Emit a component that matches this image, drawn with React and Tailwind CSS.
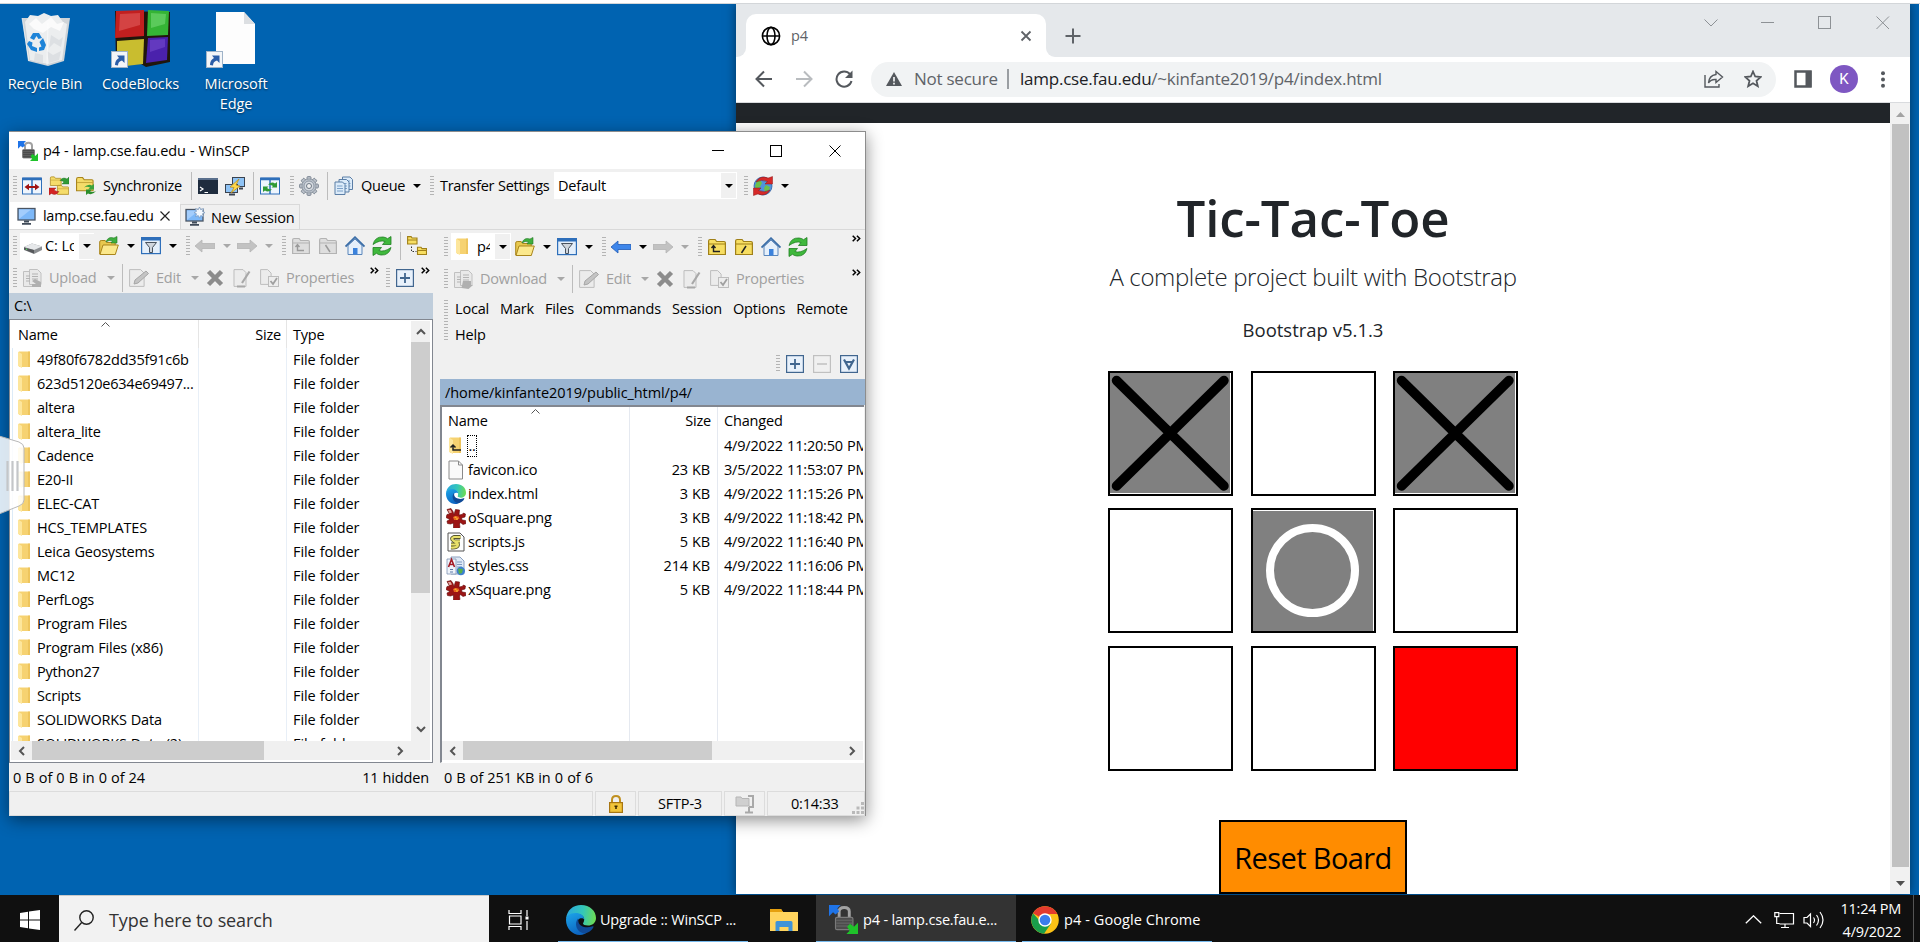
import React from "react";

/* ---------- small shared pieces ---------- */

const Svg = ({ w = 20, h = 20, vb, className = "", children }) => (
  <svg width={w} height={h} viewBox={vb || `0 0 ${w} ${h}`} className={`block shrink-0 ${className}`} fill="none">
    {children}
  </svg>
);

const Grip = ({ className = "", rows = 7 }) => (
  <Svg w={4} h={rows * 3 - 1} className={className}>
    {Array.from({ length: rows }, (_, i) => (
      <rect key={i} y={i * 3} width="4" height="1" fill="#b4b4b4" />
    ))}
  </Svg>
);

const Caret = ({ className = "", color = "#000" }) => (
  <Svg w={8} h={4} className={className}>
    <path d="M0 0h8L4 4z" fill={color} />
  </Svg>
);

const Sep = ({ className = "" }) => <div className={`h-[28px] w-px shrink-0 bg-[#bcbcbc] ${className}`} />;

const More = ({ className = "" }) => (
  <Svg w={9} h={7} className={className}>
    <path d="M.7.7l2.8 2.8L.7 6.3M4.9.7l2.8 2.8-2.8 2.8" stroke="#000" strokeWidth="1.5" />
  </Svg>
);

const Txt = ({ className = "", children }) => (
  <span className={`block shrink-0 whitespace-nowrap ${className}`}>{children}</span>
);

/* ---------- toolbar icons ---------- */

const FolderShape = ({ x = 0, y = 0, s = 1, fill = "#f5dc6a", stroke = "#a9851c" }) => (
  <g transform={`translate(${x} ${y}) scale(${s})`}>
    <path d="M.5 12.500V2q0-1.500 1.500-1.500h4l1.500 2h7q1 0 1 1v9z" fill={fill} stroke={stroke} />
    <path d="M1 5h14" stroke={stroke} strokeOpacity=".6" />
  </g>
);

const SplitIcon = ({ className }) => (
  <Svg className={className}>
    <rect x=".5" y="2" width="19" height="16" fill="#eef5fd" stroke="#2e6fba" />
    <path d="M1 3h18" stroke="#2e6fba" strokeWidth="2.500" />
    <path d="M10 3v15" stroke="#2e6fba" strokeWidth="1.500" />
    <path d="M4 11h12" stroke="#a01414" strokeWidth="2" />
    <path d="M2.500 11L7 7.800v6.400zM17.500 11L13 7.800v6.400z" fill="#a01414" />
  </Svg>
);

const SyncFoldersIcon = ({ className }) => (
  <Svg className={className}>
    <FolderShape x={1} y={0.5} s={0.72} />
    <FolderShape x={8} y={9} s={0.75} />
    <path d="M11 4.500Q14 .5 18 3L20 1v7h-7l2-2q-1.500-1.500-4-1.500z" fill="#2f9a35" stroke="#1d6f22" strokeWidth=".4" />
    <path d="M10 15.500Q7 20 2.500 17.500L0 19v-7h7l-2 2q2 1.500 5 1.500z" fill="#d42424" stroke="#8d1212" strokeWidth=".4" />
  </Svg>
);

const SynchronizeIcon = ({ className }) => (
  <Svg className={className}>
    <FolderShape x={0} y={1} s={1.1} />
    <path d="M8 11.500q4-4 8-2l2-1.500v5.500h-6l2-2q-3-1.500-6 0z" fill="#3ba23c" />
    <path d="M20 15q-4 5-8 2.500L10 19v-5.500h6l-2 2q3 1 6-.5z" fill="#2b8e2d" />
  </Svg>
);

const TerminalIcon = ({ className }) => (
  <Svg className={className}>
    <rect y="2" width="20" height="16" fill="#1f2c3e" />
    <rect y="2" width="20" height="2" fill="#5a6f8c" />
    <path d="M2 11l3 2-3 2M6.500 16.500H10" stroke="#fff" strokeWidth="1.200" />
  </Svg>
);

const PuttyIcon = ({ className }) => (
  <Svg className={className}>
    <rect x="7.500" y="1.500" width="12" height="9" fill="#8fc3f5" stroke="#3a4350" />
    <rect x=".5" y="8.500" width="12" height="8" fill="#8fc3f5" stroke="#3a4350" />
    <path d="M4 18.500h6M14 12.500h4" stroke="#3a4350" strokeWidth="2" />
    <path d="M14 3L5 11l4 .5L6 17l9-7-4-1z" fill="#ffd84a" stroke="#b98a12" strokeWidth=".7" />
  </Svg>
);

const PanelsSyncIcon = ({ className }) => (
  <Svg className={className}>
    <rect x=".5" y="2" width="19" height="16" fill="#eef5fd" stroke="#2e6fba" />
    <path d="M1 3h18" stroke="#2e6fba" strokeWidth="2.500" />
    <path d="M10 3v15" stroke="#2e6fba" strokeWidth="1.500" />
    <path d="M8 8.500Q12 5 15 7.500l2-1.500v5.500h-5.500l1.500-1.500q-2-1.500-5-1.500z" fill="#2f9a35" />
    <path d="M12 13.500Q8 17 5 14.500L3 16v-5.500h5.500L7 12q2 1.500 5 1.500z" fill="#2f9a35" />
  </Svg>
);

const GearIcon = ({ className }) => (
  <Svg className={className}>
    {[0, 45, 90, 135].map((a) => (
      <rect key={a} x="8" y=".6" width="4" height="18.800" rx="1" fill="#b9bfc8" stroke="#78828e" strokeWidth=".9" transform={`rotate(${a} 10 10)`} />
    ))}
    <circle cx="10" cy="10" r="7" fill="#bcc3cc" stroke="#848e9a" strokeWidth=".7" />
    <circle cx="10" cy="10" r="5" stroke="#8d97a4" strokeWidth="1" fill="#d5dae0" />
    <circle cx="10" cy="10" r="2.500" fill="#f0f0f0" stroke="#6f7986" />
  </Svg>
);

const QueueIcon = ({ className }) => (
  <Svg className={className}>
    {[[8.5, 1], [5, 3.5], [1, 6]].map(([x, y]) => (
      <g key={x} transform={`translate(${x} ${y})`}>
        <path d="M0 0h7.500l2.500 2.500V12.500H0z" fill="#dcebf9" stroke="#5b7ea6" />
        <path d="M2 4h5.500M2 6.500h6M2 9h6" stroke="#7ba0c8" />
      </g>
    ))}
  </Svg>
);

const GlobeSyncIcon = ({ className }) => (
  <Svg className={className}>
    <circle cx="10" cy="10" r="9" fill="#4f93dc" stroke="#2a61a8" strokeWidth=".8" />
    <path d="M4 5l3-1 2 3-2 4-4 2-1-3zM13 9l4 2-1 3-4 2-1-4z" fill="#6cc04c" />
    <path d="M3 6Q7-1 15 2l1-.2L19.500.5V8H12l2.500-2.500Q8 3 3 6z" fill="#d62828" stroke="#8f1414" strokeWidth=".5" />
    <path d="M17 14q-4 7-12 4l-1 .2L.5 19.500V12H8l-2.500 2.500Q12 17 17 14z" fill="#d62828" stroke="#8f1414" strokeWidth=".5" />
  </Svg>
);

const MonitorIcon = ({ className, star }) => (
  <Svg className={className}>
    <rect x="1" y="2.500" width="17" height="11.500" fill="#7db8f8" stroke="#4b5563" strokeWidth="1.300" />
    <path d="M2 13V3.500h12z" fill="#a3cdfc" />
    <path d="M7 14.500h5v2H7zM5 17h9v1.800H5z" fill="#3f4a58" />
    {star && <path d="M14.500 0l1.200 2.600 2.800-1-1 2.800L20 5.600l-2.500 1.200 1 2.800-2.800-1-1.200 2.600-1.200-2.600-2.800 1 1-2.800L9 5.600l2.500-1.200-1-2.800 2.800 1z" fill="#f3f8fe" stroke="#7e9cc0" strokeWidth=".8" />}
  </Svg>
);

const DriveIcon = ({ className }) => (
  <Svg w={18} className={className}>
    <path d="M0 11l8-3.500 10 3v3.500l-8 4-10-4z" fill="#8a8d90" />
    <path d="M0 11l8-3.500 10 3-8 3.500z" fill="#e6e8ea" />
    <path d="M0 11.500v2l10 4v-3.500z" fill="#55585b" />
    <circle cx="2.500" cy="13.200" r=".7" fill="#55e05a" />
  </Svg>
);

const OpenFolderIcon = ({ className }) => (
  <Svg className={className}>
    <path d="M.7 18V6q0-1.500 1.500-1.500h4l1.500 2h8.500V18z" fill="#e8c84e" stroke="#a9851c" />
    <path d="M1 18.500L4 9h15.300l-3 9.500z" fill="#fbe88c" stroke="#a9851c" />
    <path d="M7 6q2-6 8-4l3-1.500V7h-6l1.500-2Q10 3.500 7 6z" fill="#3fae3f" stroke="#217a24" strokeWidth=".6" />
  </Svg>
);

const FilterIcon = ({ className }) => (
  <Svg className={className}>
    <rect x=".6" y="1.600" width="18.800" height="16" fill="#e4effb" stroke="#2e6fba" strokeWidth="1.200" />
    <path d="M0 3h20" stroke="#2e6fba" strokeWidth="3" />
    <path d="M4.500 6.500h11l-4 5v5h-3v-5z" fill="#cfd5dc" stroke="#48525e" />
  </Svg>
);

const ArrowIcon = ({ className, dir = "l", on }) => (
  <Svg className={className}>
    <path
      d="M0 10l7-6v3.500h13v5H7V16z"
      fill={on ? "#3e86ea" : "#c2c2c2"}
      stroke={on ? "#1f5bb5" : "#b5b5b5"}
      strokeWidth=".8"
      transform={dir === "r" ? "matrix(-1 0 0 1 20 0)" : undefined}
    />
  </Svg>
);

const ParentIcon = ({ className, on, root }) => {
  const f = on ? "#f7de62" : "#dedede";
  const s = on ? "#a08018" : "#b3b3b3";
  return (
    <Svg w={18} className={className}>
      <path d="M.6 17.500V4q0-1.500 1.500-1.500h5l1.500 2H16q1.400 0 1.400 1.500v11.500z" fill={f} stroke={s} strokeWidth="1.200" />
      <path d="M1 7h16" stroke={s} />
      {root ? (
        <path d={on ? "M11 9l-4.500 7" : "M6.500 9l4.500 7"} stroke={on ? "#222" : "#9a9a9a"} strokeWidth="1.500" />
      ) : (
        <path d="M5.500 9v5.500H12M3.500 11l2-2.500 2 2.500" stroke={on ? "#222" : "#9a9a9a"} strokeWidth="1.400" />
      )}
    </Svg>
  );
};

const HomeIcon = ({ className }) => (
  <Svg className={className}>
    <path d="M3 9.500L10 3l7 6.500V18.500H3z" fill="#e6f0fb" stroke="#5a86bb" />
    <path d="M.5 10.500L10 1.200l9.500 9.300" stroke="#3b6ea8" strokeWidth="1.800" />
    <rect x="8" y="12" width="4.500" height="6.500" fill="#3b82dc" />
  </Svg>
);

const RefreshIcon = ({ className }) => (
  <Svg className={className}>
    <path d="M1 8.500Q3 .5 11 1q3 .3 4.500 1.700L19 .5V8.500h-8.500l2.500-3Q8 3.500 1 8.500z" fill="#3fb83c" stroke="#1f7f22" strokeWidth=".8" />
    <path d="M19 11.500q-2 8-10 7.500-3-.3-4.500-1.700L1 19.500v-8h8.500l-2.500 3q5 2 12-3z" fill="#3fb83c" stroke="#1f7f22" strokeWidth=".8" />
  </Svg>
);

const TreeIcon = ({ className }) => (
  <Svg className={className}>
    <path d="M.6 8V.6h3.500l1 1.400H10V8zM10.500 18.500V11.200H14l1 1.400h4.500v5.900z" fill="#f7de62" stroke="#a08018" strokeWidth="1.100" />
    <path d="M1 4h9M11 14.500h8" stroke="#a08018" />
    <path d="M4.500 10.500v5h5" stroke="#333" strokeDasharray="1.500 1.500" />
  </Svg>
);

const Page = ({ x = 0, y = 0 }) => (
  <path transform={`translate(${x} ${y})`} d="M.5.5h8l3.500 3.500V15.500H.5z" fill="#e9e9e9" stroke="#c0c0c0" />
);

const TransferIcon = ({ className, down }) => (
  <Svg className={className}>
    <Page x={0} y={3} />
    <Page x={6} y={1} />
    <path d="M3 8h4M3 10.500h4M3 13h4M9 6h6M9 8.500h6M9 11h6" stroke="#b3b3b3" />
    <path d={down ? "M9 12h8v4h2l-4.500 4-7-1z" : "M18 19h-9v-3h4l-4-3 3-2 6 3z"} fill="#b0b0b0" />
  </Svg>
);

const EditIcon = ({ className }) => (
  <Svg className={className}>
    <path d="M.6 1.600h11l3.500 3.500v13.300H.6z" fill="#ececec" stroke="#bdbdbd" />
    <path d="M5 16l1-4L17 3l2.500 2.500L9 15z" fill="#c4c4c4" stroke="#a6a6a6" />
  </Svg>
);

const DeleteIcon = ({ className }) => (
  <Svg w={18} className={className}>
    <path d="M2.500 3.500l13 13M15.500 3.500l-13 13" stroke="#8c8c8c" strokeWidth="4.500" />
  </Svg>
);

const RenameIcon = ({ className }) => (
  <Svg w={18} className={className}>
    <path d="M1 1.600h9l3 3v13.800H1z" fill="#ececec" stroke="#bdbdbd" />
    <path d="M9 15L16.500 3.500M4 18.500h8" stroke="#a8a8a8" strokeWidth="2.200" />
  </Svg>
);

const PropsIcon = ({ className }) => (
  <Svg className={className}>
    <path d="M.6 1.600h7l3.500 3.500v11.300H.6z" fill="#ececec" stroke="#bdbdbd" />
    <rect x="8.500" y="8.500" width="10" height="10" fill="#ededed" stroke="#bdbdbd" />
    <path d="M10.500 13l2.500 3 4-6" stroke="#a0a0a0" strokeWidth="1.800" />
  </Svg>
);

const BoxBtn = ({ className, kind }) => {
  const off = kind === "minus";
  const c = off ? "#c0c0c0" : "#41668f";
  return (
    <Svg w={18} h={18} className={className}>
      <rect x=".6" y=".6" width="16.800" height="16.800" fill={off ? "#f0f0f0" : "#e8f1fb"} stroke={c} strokeWidth="1.200" />
      {kind === "plus" && <path d="M9 4v10M4 9h10" stroke={c} strokeWidth="1.800" />}
      {kind === "minus" && <path d="M4 9h10" stroke={c} strokeWidth="1.500" />}
      {kind === "all" && <path d="M4 4.500l5 9 5-9M6 7h6" stroke={c} strokeWidth="2.200" />}
    </Svg>
  );
};

const LockBadge = ({ s = 20, className }) => (
  <Svg w={s} h={s} vb="0 0 20 20" className={className}>
    <path d="M7 9V4.500q0-2.800 3.500-2.800T14 4.500V9" stroke="#a2a2a2" strokeWidth="2" />
    <rect x="4.500" y="8.500" width="12" height="8.500" rx="1" fill="#4c4c4c" stroke="#7a7a7a" strokeWidth=".8" />
    <path d="M5 10.500h11M5 12.500h11M5 14.500h11" stroke="#6d6d6d" strokeWidth=".6" />
    <path d="M0 0h8L5.800 2.200 7 4.500 4.500 6.500 2.800 5 0 7.800z" fill="#1f74e8" />
    <path d="M20 20h-8l2.200-2.200L12.500 15l2-2 2.700 2 2.800-2.800z" fill="#1fc22a" />
  </Svg>
);

/* ---------- file list icons ---------- */

const FolderIcon = ({ up }) => (
  <Svg w={13} h={18}>
    <path d="M1 .5h11v15.500H1z" fill="#f6d271" />
    <path d="M10 .5h2v15.500h-2z" fill="#e9bd50" opacity=".6" />
    <path d="M0 .5l4 2.500v14L0 15z" fill="#fde69c" />
    {up && <path d="M4 8v5h8M1.500 10.500L4 8l2.500 2.500" stroke="#222" strokeWidth="1.500" />}
  </Svg>
);

const EdgeIcon = ({ s = 20, id }) => (
  <Svg w={s} h={s} vb="0 0 30 30">
    <defs>
      <linearGradient id={`${id}a`} x1="0" y1="8" x2="30" y2="12" gradientUnits="userSpaceOnUse">
        <stop offset="0" stopColor="#2aa7e0" />
        <stop offset=".55" stopColor="#34c7b8" />
        <stop offset="1" stopColor="#6fdc50" />
      </linearGradient>
      <linearGradient id={`${id}b`} x1="5" y1="8" x2="14" y2="29" gradientUnits="userSpaceOnUse">
        <stop offset="0" stopColor="#1ba0e6" />
        <stop offset="1" stopColor="#0c63c0" />
      </linearGradient>
    </defs>
    <path d="M0 14C1 5 7 0 15 0c9 0 15 6 15 13 0 5-4 7.500-8 7.500-3 0-5-1-5-2 0-.8 1.200-1.500 1.200-4C18.200 11 15 9 10.500 9 5 9 1.500 11 0 14z" fill={`url(#${id}a)`} />
    <path d="M0 15c0-4 4-7 9.500-7 5 0 8.700 2.500 8.700 6.500C17 12.500 11 12 11 19c0 6 6 8.500 11 7.500-2 2-5 3.500-8 3.500C6 30 0 23 0 15z" fill={`url(#${id}b)`} />
    <path d="M12 13.500C8 18 10 27 18 28.500c4-.3 8-3 9.500-6.500.3-.8-.5-1-1-.7C20 24 13 21 12.500 17z" fill="#0f4a97" />
    <path d="M13 15.500q3-3 5.200-1-.2 2-1.200 4 1 2 4 2-5 1-7-1-1.500-2-1-4z" fill="#fff" opacity={s > 20 ? 0 : 1} />
  </Svg>
);

const SplatIcon = () => (
  <Svg>
    <path
      d="M1 1.500l4-1 2 3 1 3 1.500-5 4 .5-.5 5 3-.5 1.500-1.500 2 1-.5 3-3.500 1 .5 2 3.500.5.5 3-3 1-2.500-2-1 1.500.5 3.500-3.500 1.500-3-1v-5l-3 1-3-.5-.5-2.500 3-1.500L0 9.500l1-3 2.500-.5z"
      fill="#9c1414"
      stroke="#5f0909"
      strokeWidth=".6"
    />
    <path d="M2 2l2.500-.3L6 4.500l-2.500.8z" fill="#e3a9a2" />
    <path d="M7 9l2.500-1 3 .5 1 2-2.500 1.500H8z" fill="#e8641c" />
    <path d="M8.500 9.200h2M10 11h2" stroke="#ffd23e" />
  </Svg>
);

const BlankIcon = () => (
  <Svg>
    <path d="M3 1h9.500l4 4v14H3z" fill="#fafafa" stroke="#8a8a8a" />
    <path d="M12.500 1v4h4" stroke="#8a8a8a" />
  </Svg>
);

const JsIcon = () => (
  <Svg>
    <path d="M2 1h12l4 4v14H2z" fill="#fdfdfd" stroke="#555" />
    <path d="M14.500 5H8Q4 6.500 8 9t4 3.500Q12 16 5 15.500M8.500 9.300h5.500M5 12.500h6" stroke="#55552c" strokeWidth="3.800" />
    <path d="M14.500 5H8Q4 6.500 8 9t4 3.500Q12 16 5 15.500M8.500 9.300h5.500M5 12.500h6" stroke="#e8e06a" strokeWidth="2.200" />
  </Svg>
);

const CssIcon = () => (
  <Svg>
    <path d="M5 1h9l4 4v13H5z" fill="#dfe9f6" stroke="#8ba1bf" />
    <path d="M11 6h5M11 8.500h5M11 11h5" stroke="#7e99bf" />
    <path d="M1 3h9v15H1z" fill="#eef3fa" stroke="#7f93b3" strokeWidth=".8" />
    <path d="M2.500 11L5.500 3.500l3 7.500M3.500 8.500h4" stroke="#a31a24" strokeWidth="1.600" />
    <path d="M4 13.500h3M4 16h3" stroke="#5a78a8" />
    <circle cx="14.800" cy="15" r="4.200" fill="#3c7fd0" />
    <path d="M12 12.500l5 .5-1 4-3 1z" fill="#58b04a" />
  </Svg>
);

/* ---------- desktop shortcuts ---------- */

const ShortcutArrow = ({ x, y }) => (
  <g transform={`translate(${x} ${y})`}>
    <rect x=".5" y=".5" width="16" height="16" fill="#f4f6f8" stroke="#9fb3c8" />
    <path d="M4 14q0-5 4-7L6 4.500h7.500V12L11 9.500q-4 1-4 5z" fill="#2b5ea8" />
  </g>
);

const RecycleBin = () => (
  <Svg w={60} h={60}>
    <path d="M7 9l48 0-6 43-16 5-20-5z" fill="#cfd4d8" />
    <path d="M10 13l5-7 8 1 6-3 7 3 7-1 5 7 4 2-5 36-14 4-18-4z" fill="#eceeef" />
    <path d="M14 15l7-6 6 6 9-7 6 7 7-2-4 9-9-4-8 6-9-4z" fill="#fbfbfb" />
    <path d="M36 26l8 5 4-3-2 10-7-4-5 5zM32 42l6 4 8-4-2 9-10 3zM20 44l8 2v8l-9-2z" fill="#dde0e3" />
    <path d="M33 14l-1 42M7 9l7 43" stroke="#fff" strokeOpacity=".6" />
    <g fill="#1e84d8">
      <path d="M15 29l3-5 6 0 3 5-3.500 1-2-3-2.500 4z" />
      <path d="M28 29l3 7-2 5-5 1 0-3.500 2.500-1L24.500 33z" />
      <path d="M14 32l3.500 1.500L17 37l5 2v4l-6-2-4-6z" />
      <path d="M36 37l1 0 7 5-1 8-6 1 0-4 3-1.500-3-3z" opacity="0" />
    </g>
  </Svg>
);

const CodeBlocks = () => (
  <Svg w={60} h={60}>
    <path d="M4 2l55 1v50L35 58l-5-3L5 56z" fill="#20160c" />
    <path d="M5 2l28-1v26L4 29z" fill="#c21f1f" />
    <path d="M9 5l20-1v12L8 22z" fill="#e05c5c" opacity=".6" />
    <path d="M37 1l21 1-1 24-21 1z" fill="#35b435" />
    <path d="M40 4l15 1-1 10-14 4z" fill="#74d874" opacity=".6" />
    <path d="M6 32l27-2-1 25-26 3z" fill="#c9bd2f" />
    <path d="M37 29l20-1-1 23-21 3z" fill="#4a21ac" />
    <path d="M39 31l15-1v8l-15 5z" fill="#7b51d2" opacity=".5" />
    <ShortcutArrow x={0} y={42} />
  </Svg>
);

const BlankShortcut = () => (
  <Svg w={60} h={60}>
    <path d="M16 3h28l11 12v40H16z" fill="#fdfdfd" />
    <path d="M44 3l11 12H44z" fill="#dcdfe2" />
    <ShortcutArrow x={6} y={42} />
  </Svg>
);

const Shortcut = ({ className, icon, lines }) => (
  <div className={`flex shrink-0 flex-col items-center ${className}`}>
    {icon}
    <div className="mt-[5px] text-center text-[14.500px] leading-[20px] text-white [text-shadow:0_1px_2px_rgba(0,0,0,.55)]">
      {lines.map((l) => (
        <div key={l} className="whitespace-nowrap tracking-[-0.1px]">{l}</div>
      ))}
    </div>
  </div>
);

/* ---------- Chrome ---------- */

const XCell = ({ className = "" }) => (
  <div className={`h-[125px] w-[125px] border-2 border-black bg-white ${className}`}>
    <Svg w={121} h={121}>
      <rect width="120" height="120" x={0} y={0} fill="#808080" />
      <path d="M6.500 7.500L114 113M114 7.500L6.500 113" stroke="#000" strokeWidth="9.500" strokeLinecap="round" />
    </Svg>
  </div>
);

const Cell = ({ className = "bg-white" }) => <div className={`h-[125px] w-[125px] border-2 border-black ${className}`} />;

const Chrome = () => (
  <div className="absolute left-[736px] top-0 flex h-[890px] w-[1174px] flex-col bg-white shadow-[0_0_10px_rgba(0,0,0,.5)]">
    <div className="flex h-[53px] shrink-0 bg-[#e5e8eb] text-[#5f6368]">
      <div className="flex h-[53px] w-[10px] items-end bg-white">
        <div className="h-[53px] w-[10px] rounded-br-[9px] bg-[#e5e8eb]" />
      </div>
      <div className="mt-[10px] flex h-[43px] w-[300px] items-center rounded-t-[10px] bg-white pl-[15px]">
        <Svg w={20} h={20} className="text-black">
          <g stroke="#000" strokeWidth="1.600">
            <circle cx="10" cy="10" r="8.600" />
            <ellipse cx="10" cy="10" rx="4" ry="8.600" />
            <path d="M1.500 10h17" strokeWidth="1.500" />
          </g>
        </Svg>
        <Txt className="ml-[10px] w-[229px] text-[14.500px]">p4</Txt>
        <Svg w={12} h={12}>
          <path d="M1.500 1.500l9 9M10.500 1.500l-9 9" stroke="#5f6368" strokeWidth="1.800" />
        </Svg>
      </div>
      <div className="h-[53px] w-[10px] bg-white">
        <div className="h-[53px] w-[10px] rounded-bl-[9px] bg-[#e5e8eb]" />
      </div>
      <Svg w={16} h={16} className="ml-[9px] mt-[24px]">
        <path d="M8 .5v15M.5 8h15" stroke="#5f6368" strokeWidth="2" />
      </Svg>
      <Svg w={14} h={9} className="ml-[623px] mt-[15px]">
        <path d="M.5.5l6.500 6.500L13.500.5" stroke="#8d9195" />
      </Svg>
      <Svg w={14} h={2} className="ml-[43px] mt-[18px]">
        <path d="M0 .5h13" stroke="#8d9195" />
      </Svg>
      <Svg w={14} h={14} className="ml-[43px] mt-[12px]">
        <rect x=".5" y=".5" width="12" height="12" stroke="#8d9195" />
      </Svg>
      <Svg w={14} h={14} className="ml-[44px] mt-[12px]">
        <path d="M.5.5l12.500 12.500M13 .5L.5 13" stroke="#8d9195" />
      </Svg>
    </div>

    <div className="flex h-[46px] shrink-0 items-center border-b border-[#d9dbde] pb-px">
      <Svg w={18} h={18} className="ml-[19px]">
        <path d="M17 9H2M9 1.500L1.500 9 9 16.500" stroke="#54585d" strokeWidth="2" />
      </Svg>
      <Svg w={18} h={18} className="ml-[22px]">
        <path d="M1 9h15M9 1.500L16.500 9 9 16.500" stroke="#b9bcbf" strokeWidth="2" />
      </Svg>
      <Svg w={18} h={18} className="ml-[22px]">
        <path d="M15 4.200A7.600 7.600 0 1 0 16.500 11" stroke="#54585d" strokeWidth="2" />
        <path d="M17.500.5v7.500H10z" fill="#54585d" />
      </Svg>
      <div className="ml-[18px] flex h-[35px] w-[905px] items-center rounded-full bg-[#f1f3f4] text-[17px] text-[#5f6368]">
        <Svg w={16} h={14} className="ml-[15px]">
          <path d="M8 0l8 14H0z" fill="#54585d" />
          <path d="M8 5v4.500M8 10.700v1.800" stroke="#f1f3f4" strokeWidth="1.700" />
        </Svg>
        <Txt className="ml-[12px] w-[93px] pb-px tracking-[-0.25px]">Not secure</Txt>
        <div className="h-[20px] w-[2px] bg-[#9a9ea2]" />
        <Txt className="ml-[11px] w-[575px] tracking-[-0.23px]">
          <span className="text-[#202124]">lamp.cse.fau.edu</span>/~kinfante2019/p4/index.html
        </Txt>
        <Svg w={20} h={18} className="ml-auto mr-[20px]">
          <path d="M1 5v12h14v-3" stroke="#54585d" strokeWidth="1.400" />
          <path d="M12 1.500l6.500 5.500-6.500 5.500V9.500Q7 9 4.500 13 5 5.500 12 4.500z" stroke="#54585d" strokeWidth="1.400" />
        </Svg>
        <Svg w={18} h={18} className="mr-[14px]">
          <path d="M9 1.500l2.200 5 5.500.5-4.200 3.700 1.300 5.500L9 13.300l-4.800 2.900 1.300-5.500L1.300 7l5.500-.5z" stroke="#54585d" strokeWidth="1.800" />
        </Svg>
      </div>
      <Svg w={18} h={18} className="ml-[18px]">
        <rect x="1.500" y="1.500" width="15" height="15" fill="#fff" stroke="#54585d" strokeWidth="2.500" />
        <path d="M11.500 1h6v16h-6z" fill="#54585d" />
      </Svg>
      <div className="ml-[18px] flex h-[28px] w-[28px] items-center justify-center rounded-full bg-[#7e57c2] font-[Roboto] text-[15px] text-white">K</div>
      <Svg w={4} h={17} className="ml-[23px]">
        <circle cx="2" cy="2.200" r="2" fill="#54585d" />
        <circle cx="2" cy="8.500" r="2" fill="#54585d" />
        <circle cx="2" cy="14.800" r="2" fill="#54585d" />
      </Svg>
    </div>

    <div className="flex min-h-0 flex-1">
      <div className="flex w-[1154px] flex-col items-center overflow-hidden bg-white text-[#212529]">
        <div className="h-[20px] w-full shrink-0 bg-[#212529]" />
        <h1 className="mt-[62px] h-[64px] text-[51px] font-semibold leading-[64px] tracking-[-0.1px]">Tic-Tac-Toe</h1>
        <p className="mt-[12px] h-[32px] whitespace-nowrap text-[24px] font-light leading-[32px] tracking-[-0.36px]">A complete project built with Bootstrap</p>
        <p className="mt-[24px] h-[26px] text-[18.500px] leading-[26px]">Bootstrap v5.1.3</p>
        <div className="mt-[28px] flex flex-col items-center">
          <div className="flex">
            <XCell />
            <Cell className="ml-[18px] bg-white" />
            <XCell className="ml-[17px]" />
          </div>
          <div className="mt-[12px] flex">
            <Cell />
            <div className="ml-[18px] h-[125px] w-[125px] border-2 border-black bg-white">
              <Svg w={121} h={121}>
                <rect y="1" width="120" height="120" fill="#808080" />
                <circle cx="59.500" cy="60.500" r="42.500" stroke="#fff" strokeWidth="8" />
              </Svg>
            </div>
            <Cell className="ml-[17px] bg-white" />
          </div>
          <div className="mt-[13px] flex">
            <Cell />
            <Cell className="ml-[18px] bg-white" />
            <Cell className="ml-[17px] bg-[#ff0000]" />
          </div>
        </div>
        <button className="mt-[49px] flex h-[74px] w-[188px] shrink-0 items-center justify-center whitespace-nowrap border-2 border-black bg-[#ff8c00] pt-[2px] text-[29px] tracking-[-0.6px] text-black">
          Reset Board
        </button>
      </div>
      <div className="flex w-[20px] flex-col items-center bg-[#f1f1f1]">
        <Svg w={9} h={5} className="mt-[9px]">
          <path d="M4.500 0L9 5H0z" fill="#a3a3a3" />
        </Svg>
        <div className="mt-[7px] h-[743px] w-[17px] bg-[#c1c1c1]" />
        <Svg w={9} h={5} className="mt-[14px]">
          <path d="M0 0h9L4.500 5z" fill="#505050" />
        </Svg>
      </div>
    </div>
  </div>
);

/* ---------- WinSCP ---------- */

const folders = [
  "49f80f6782dd35f91c6b",
  "623d5120e634e69497...",
  "altera",
  "altera_lite",
  "Cadence",
  "E20-II",
  "ELEC-CAT",
  "HCS_TEMPLATES",
  "Leica Geosystems",
  "MC12",
  "PerfLogs",
  "Program Files",
  "Program Files (x86)",
  "Python27",
  "Scripts",
  "SOLIDWORKS Data",
  "SOLIDWORKS Data (2)",
];

const files = [
  [<BlankIcon />, "favicon.ico", "23 KB", "3/5/2022 11:53:07 PM"],
  [<EdgeIcon id="f" />, "index.html", "3 KB", "4/9/2022 11:15:26 PM"],
  [<SplatIcon />, "oSquare.png", "3 KB", "4/9/2022 11:18:42 PM"],
  [<JsIcon />, "scripts.js", "5 KB", "4/9/2022 11:16:40 PM"],
  [<CssIcon />, "styles.css", "214 KB", "4/9/2022 11:16:06 PM"],
  [<SplatIcon />, "xSquare.png", "5 KB", "4/9/2022 11:18:44 PM"],
];

const SortMark = ({ className }) => (
  <Svg w={9} h={5} className={className}>
    <path d="M.5 4.500l4-4 4 4" stroke="#555" />
  </Svg>
);

const Chevron = ({ className = "", d, w, h }) => (
  <Svg w={w} h={h} className={className}>
    <path d={d} stroke="#555" strokeWidth="2" />
  </Svg>
);

const HScroll = ({ thumb, className }) => (
  <div className={`flex h-[19px] shrink-0 items-center bg-[#f0f0f0] ${className}`}>
    <Chevron w={7} h={10} d="M6 1L2 5l4 4" className="mx-[7px]" />
    <div className={`h-[19px] bg-[#cdcdcd] ${thumb}`} />
    <Chevron w={7} h={10} d="M1 1l4 4-4 4" className="ml-auto mr-[7px]" />
  </div>
);

const Off = "#a8a8a8";

const NavTail = ({ on }) => (
  <>
    <OpenFolderIcon />
    <Caret className="ml-[8px]" />
    <FilterIcon className="ml-[6px]" />
    <Caret className="ml-[8px]" />
    <Grip className="ml-[9px]" />
    <ArrowIcon className="ml-[5px]" on={on} />
    <Caret className="ml-[8px]" color={on ? "#000" : Off} />
    <ArrowIcon className="ml-[6px]" dir="r" />
    <Caret className="ml-[8px]" color={Off} />
    <Grip className="ml-[9px]" />
    <ParentIcon className="ml-[6px]" on={on} />
    <ParentIcon className="ml-[9px]" on={on} root />
    <HomeIcon className="ml-[8px]" />
    <RefreshIcon className="ml-[7px]" />
  </>
);

const EditTail = () => (
  <>
    <Sep className="ml-[7px]" />
    <EditIcon className="ml-[6px]" />
    <Txt className="ml-[7px] w-[35px]">Edit</Txt>
    <Caret color={Off} />
    <DeleteIcon className="ml-[7px]" />
    <RenameIcon className="ml-[9px]" />
    <PropsIcon className="ml-[9px]" />
    <Txt className="ml-[6px] w-[84px]">Properties</Txt>
  </>
);

const LocalPane = () => (
  <div className="flex w-[424px] shrink-0 flex-col">
    <div className="flex h-[33px] items-center">
      <Grip className="ml-[4px]" />
      <div className="ml-[3px] flex h-[27px] w-[74px] items-center bg-white">
        <DriveIcon className="ml-[4px]" />
        <Txt className="ml-[3px] w-[29px] overflow-hidden">C: Local</Txt>
        <div className="ml-[5px] flex h-[25px] w-[15px] items-center justify-center bg-[#f0f0f0]">
          <Caret />
        </div>
      </div>
      <div className="w-[5px]" />
      <NavTail />
      <Sep className="ml-[8px]" />
      <TreeIcon className="ml-[6px]" />
    </div>
    <div className="flex h-[31px] items-center text-[#a0a0a0]">
      <Grip className="ml-[4px]" />
      <TransferIcon className="ml-[6px]" />
      <Txt className="ml-[6px] w-[58px]">Upload</Txt>
      <Caret color={Off} />
      <EditTail />
      <More className="mb-[14px]" />
      <Grip className="ml-[7px]" />
      <BoxBtn kind="plus" className="ml-[6px]" />
      <More className="mb-[14px] ml-[7px]" />
    </div>
    <div className="flex h-[26px] shrink-0 items-center bg-[#bfcddb] pl-[5px]">C:\</div>
    <div className="flex h-[444px] shrink-0 flex-col border border-[#828790] bg-white pl-px">
      <div className="flex h-[421px]">
        <div className="w-[400px] overflow-hidden pl-px">
          <div className="flex h-[28px]">
            <div className="flex w-[187px] border-r border-[#e5e5e5] pl-[6px]">
              <span className="w-[83px] pt-[5px]">Name</span>
              <SortMark className="mt-[2px]" />
            </div>
            <div className="w-[88px] border-r border-[#e5e5e5] pr-[5px] pt-[5px] text-right">Size</div>
            <div className="pl-[6px] pt-[5px]">Type</div>
          </div>
          <div className="flex">
            <div className="w-[187px] border-r border-[#e8eff7]">
              {folders.map((f) => (
                <div key={f} className="flex h-[24px] items-center border-l border-[#dcebf8] pl-[5px]">
                  <FolderIcon />
                  <Txt className="ml-[6px]">{f}</Txt>
                </div>
              ))}
            </div>
            <div className="w-[88px] border-r border-[#e8eff7]" />
            <div className="pl-[6px]">
              {folders.map((f) => (
                <div key={f} className="flex h-[24px] items-center">
                  <Txt className="tracking-[-0.1px]">File folder</Txt>
                </div>
              ))}
            </div>
          </div>
        </div>
        <div className="mt-px flex w-[19px] flex-col items-center bg-[#f0f0f0]">
          <Chevron w={10} h={7} d="M1 6l4-4 4 4" className="mb-[7px] mt-[7px]" />
          <div className="h-[251px] w-[19px] shrink-0 bg-[#cdcdcd]" />
          <Chevron w={10} h={7} d="M1 1l4 4 4-4" className="mb-[8px] mt-auto" />
        </div>
      </div>
      <HScroll className="mr-[2px] w-[419px] pr-[19px]" thumb="w-[232px]" />
    </div>
    <div className="flex h-[28px] items-center justify-between pl-[4px] pr-[4px] pt-px">
      <Txt className="tracking-[-0.1px]">0 B of 0 B in 0 of 24</Txt>
      <Txt className="tracking-[-0.15px]">11 hidden</Txt>
    </div>
  </div>
);

const RemotePane = () => (
  <div className="ml-[7px] flex w-[425px] flex-col">
    <div className="flex h-[33px] items-center">
      <Grip className="ml-[4px]" />
      <div className="ml-[3px] flex h-[27px] w-[60px] items-center bg-white">
        <span className="ml-[5px]"><FolderIcon /></span>
        <Txt className="ml-[8px] w-[13px] overflow-hidden">p4</Txt>
        <div className="ml-[5px] flex h-[25px] w-[15px] items-center justify-center bg-[#f0f0f0]">
          <Caret />
        </div>
      </div>
      <div className="w-[4px]" />
      <NavTail on />
      <More className="mb-[16px] ml-[44px]" />
    </div>
    <div className="flex h-[32px] items-center text-[#a0a0a0]">
      <Grip className="ml-[4px]" />
      <TransferIcon down className="ml-[6px]" />
      <Txt className="ml-[6px] w-[77px]">Download</Txt>
      <Caret color={Off} />
      <EditTail />
      <More className="mb-[14px] ml-[32px]" />
    </div>
    <div className="flex h-[51px] items-start pt-px">
      <Grip className="ml-[4px] mt-[4px]" rows={14} />
      <div className="ml-[7px] flex flex-wrap gap-x-[11px] leading-[26px]">
        {["Local", "Mark", "Files", "Commands", "Session", "Options", "Remote", "Help"].map((m) => (
          <Txt key={m} className="tracking-[-0.18px]">{m}</Txt>
        ))}
      </div>
    </div>
    <div className="flex h-[33px] items-center justify-end pr-[7px] pt-[2px]">
      <Grip rows={6} />
      <BoxBtn kind="plus" className="ml-[6px]" />
      <BoxBtn kind="minus" className="ml-[9px]" />
      <BoxBtn kind="all" className="ml-[9px]" />
    </div>
    <div className="flex h-[26px] shrink-0 items-center bg-[#99b4d1] pl-[5px] pt-px tracking-[-0.08px]">/home/kinfante2019/public_html/p4/</div>
    <div className="flex h-[358px] w-[424px] shrink-0 flex-col border-b border-l-2 border-t-2 border-[#828790] border-b-white bg-white">
      <div className="flex h-[334px] overflow-hidden">
        <div className="w-[188px] border-r border-[#e5e9f0]">
          <div className="flex h-[27px] pl-[6px]">
            <span className="w-[83px] pt-[4px]">Name</span>
            <SortMark className="mt-[2px]" />
          </div>
          <div className="flex h-[24px] items-center pl-[7px]">
            <FolderIcon up />
            <span className="ml-[5px] flex h-[22px] w-[10px] items-center justify-center border border-dotted border-black leading-[14px]">..</span>
          </div>
          {files.map((f) => (
            <div key={f[1]} className="flex h-[24px] items-center pl-[4px]">
              {f[0]}
              <Txt className="ml-[2px]">{f[1]}</Txt>
            </div>
          ))}
        </div>
        <div className="w-[88px] border-r border-[#e5e9f0] text-right">
          <div className="h-[27px] pr-[6px] pt-[4px]">Size</div>
          <div className="h-[24px]" />
          {files.map((f) => (
            <div key={f[1]} className="flex h-[24px] items-center justify-end pr-[7px]">
              <Txt className="tracking-[-0.15px]">{f[2]}</Txt>
            </div>
          ))}
        </div>
        <div className="w-[145px] overflow-hidden pl-[6px] tracking-[-0.18px]">
          <div className="h-[27px] pt-[4px]">Changed</div>
          <div className="flex h-[24px] items-center">
            <Txt>4/9/2022 11:20:50 PM</Txt>
          </div>
          {files.map((f) => (
            <div key={f[1]} className="flex h-[24px] items-center">
              <Txt>{f[3]}</Txt>
            </div>
          ))}
        </div>
      </div>
      <HScroll className="w-[421px]" thumb="w-[249px]" />
    </div>
    <div className="flex h-[28px] items-center pl-[4px] pt-px">
      <Txt className="tracking-[-0.1px]">0 B of 251 KB in 0 of 6</Txt>
    </div>
  </div>
);

const WinScp = () => (
  <div className="absolute left-[9px] top-[127px] flex h-[685px] w-[857px] flex-col border-r border-t border-[#8d8d8d] bg-[#f0f0f0] text-[14.500px] leading-[20px] tracking-[-0.21px] text-black shadow-[0_4px_16px_rgba(0,0,0,.45)] [word-spacing:0.5px]">
    <div className="flex h-[37px] shrink-0 items-center bg-white">
      <LockBadge className="ml-[9px]" />
      <Txt className="ml-[5px] tracking-[-0.13px]">p4 - lamp.cse.fau.edu - WinSCP</Txt>
      <Svg w={12} h={12} className="ml-auto">
        <path d="M0 5.500h12" stroke="#000" />
      </Svg>
      <Svg w={12} h={12} className="ml-[46px]">
        <rect x=".5" y=".5" width="11" height="11" stroke="#000" />
      </Svg>
      <Svg w={12} h={12} className="ml-[47px] mr-[24px]">
        <path d="M.5.5l11 11M11.500.5l-11 11" stroke="#000" />
      </Svg>
    </div>

    <div className="flex h-[33px] shrink-0 items-center">
      <Grip className="ml-[4px]" />
      <SplitIcon className="ml-[5px]" />
      <SyncFoldersIcon className="ml-[7px]" />
      <SynchronizeIcon className="ml-[7px]" />
      <Txt className="ml-[7px] w-[88px] tracking-[-0.3px]">Synchronize</Txt>
      <Sep />
      <TerminalIcon className="ml-[6px]" />
      <PuttyIcon className="ml-[7px]" />
      <Sep className="ml-[8px]" />
      <PanelsSyncIcon className="ml-[6px]" />
      <Grip className="ml-[10px]" />
      <GearIcon className="ml-[5px]" />
      <Sep className="ml-[8px]" />
      <QueueIcon className="ml-[6px]" />
      <Txt className="ml-[7px] w-[52px]">Queue</Txt>
      <Caret />
      <Grip className="ml-[9px]" />
      <Txt className="ml-[6px] w-[114px] tracking-[-0.32px]">Transfer Settings</Txt>
      <div className="flex h-[27px] w-[183px] items-center bg-white pl-[4px]">
        <Txt className="flex-1 pt-px">Default</Txt>
        <div className="mr-px flex h-[25px] w-[15px] items-center justify-center bg-[#f0f0f0]">
          <Caret />
        </div>
      </div>
      <Grip className="ml-[7px]" />
      <GlobeSyncIcon className="ml-[5px]" />
      <Caret className="ml-[8px]" />
    </div>

    <div className="flex h-[28px] shrink-0 items-end border-b border-[#d9d9d9]">
      <div className="ml-px flex h-[27px] w-[170px] items-center bg-white">
        <MonitorIcon className="ml-[7px]" />
        <Txt className="ml-[6px] w-[117px] tracking-[-0.29px]">lamp.cse.fau.edu</Txt>
        <Svg w={10} h={10}>
          <path d="M.5.5l9 9M9.500.5l-9 9" stroke="#222" strokeWidth="1.200" />
        </Svg>
      </div>
      <div className="flex h-[25px] w-[120px] items-center border-l border-r border-t border-[#d9d9d9]">
        <MonitorIcon star className="ml-[4px]" />
        <Txt className="ml-[6px] pt-[2px]">New Session</Txt>
      </div>
    </div>

    <div className="flex h-[561px] shrink-0">
      <LocalPane />
      <RemotePane />
    </div>

    <div className="flex h-[25px] shrink-0 gap-[2px] [&>div]:border [&>div]:border-[#dcdcdc]">
      <div className="w-[584px]" />
      <div className="flex w-[41px] items-center justify-center">
        <Svg w={14} h={18}>
          <path d="M3 8V5q0-4 4-4t4 4v3" stroke="#c09020" strokeWidth="2" />
          <rect x=".6" y="7.600" width="12.800" height="9.800" fill="#f2c53a" stroke="#a87612" strokeWidth="1.200" />
          <path d="M7 10.500v3.500M5.500 11.300h3" stroke="#3d2c05" strokeWidth="1.600" />
        </Svg>
      </div>
      <div className="flex w-[84px] items-center justify-center">SFTP-3</div>
      <div className="flex w-[41px] items-center justify-center">
        <Svg w={20} h={20}>
          <path d="M1 12V3h5l1 1.500h7V12z" fill="#cfcfcf" stroke="#b5b5b5" />
          <path d="M13 2h5v11h-4M14 13v5M10 18.500h8" stroke="#a9a9a9" strokeWidth="2" />
        </Svg>
      </div>
      <div className="flex flex-1 items-end">
        <Txt className="w-[84px] self-center pl-[23px]">0:14:33</Txt>
        <Svg w={12} h={12} className="mb-px">
          <path d="M9 0h3v3H9zM9 4.500h3v3H9zM9 9h3v3H9zM4.500 4.500h3v3h-3zM4.500 9h3v3h-3zM0 9h3v3H0z" fill="#b9b9b9" />
        </Svg>
      </div>
    </div>
  </div>
);

/* ---------- taskbar ---------- */

const Taskbar = () => (
  <div className="flex h-[47px] shrink-0 bg-[#101010] text-[14.500px] tracking-[-0.25px] text-white">
    <div className="flex w-[59px] items-center justify-center pt-[3px]">
      <Svg w={20} h={20}>
        <path d="M0 3l8-1.200V9.500H0zM9 1.600L20 0v9.500H9zM0 10.500h8v7.800L0 17zM9 10.500h11V20L9 18.400z" fill="#fff" />
      </Svg>
    </div>
    <div className="flex w-[430px] items-center border-t border-[#c9c9c9] bg-[#f2f2f2] pl-[14px] pt-[3px] text-[18px] tracking-[-0.1px] text-[#333]">
      <Svg w={22} h={22}>
        <circle cx="13.500" cy="7.500" r="6.700" stroke="#222" strokeWidth="1.400" />
        <path d="M8.700 12.500L1.500 20.500" stroke="#222" strokeWidth="1.400" />
      </Svg>
      <Txt className="ml-[14px]">Type here to search</Txt>
    </div>
    <div className="flex w-[69px] items-center pl-[19px] pt-[2px]">
      <Svg w={21} h={20}>
        <path d="M1 0v3.500h12V0M1 20v-3.500h12V20M1.500 6h11.500v8H1.500zM19 0v6M19 11v9" stroke="#fff" strokeWidth="1.200" />
        <path d="M17.500 6.500h3v3h-3z" fill="#fff" />
      </Svg>
    </div>
    <div className="flex w-[190px] items-center border-b border-[#76b9ed] pl-[8px] pt-[3px]">
      <EdgeIcon s={30} id="t" />
      <Txt className="ml-[4px] tracking-[-0.2px]">Upgrade :: WinSCP ...</Txt>
    </div>
    <div className="flex w-[68px] items-center pl-[22px] pt-[2px]">
      <Svg w={28} h={24}>
        <path d="M0 1h11l2 3h15v19H0z" fill="#ffd45e" />
        <path d="M0 1h11l2 3H0z" fill="#e5a00f" />
        <path d="M5.500 23v-8.500q0-1.500 1.500-1.500h14q1.500 0 1.500 1.500V23h-4v-4h-9v4z" fill="#3f93d8" />
      </Svg>
    </div>
    <div className="flex w-[200px] items-center border-b border-[#76b9ed] bg-[#333] pl-[13px] pt-[3px]">
      <LockBadge s={29} />
      <Txt className="ml-[5px] tracking-[-0.18px]">p4 - lamp.cse.fau.e...</Txt>
    </div>
    <div className="ml-[6px] flex w-[190px] items-center border-b border-[#76b9ed] pl-[9px] pt-[3px]">
      <Svg w={28} h={28}>
        <circle cx="14" cy="14" r="13.800" fill="#fbc116" />
        <path d="M14 14L2 7.200A13.800 13.800 0 0 1 26 7.200H14z" fill="#e33b2e" />
        <path d="M2 7.200A13.800 13.800 0 0 0 13 27.700L20 17.500 14 14 8 14z" fill="#1a9e4b" />
        <path d="M14 7.500h12" stroke="#e33b2e" />
        <circle cx="14" cy="14" r="6.700" fill="#fff" />
        <circle cx="14" cy="14" r="5.300" fill="#3b7ded" />
      </Svg>
      <Txt className="ml-[5px] tracking-[0.08px]">p4 - Google Chrome</Txt>
    </div>
    <div className="ml-auto flex items-center">
      <Svg w={17} h={9} className="mt-[2px]">
        <path d="M.8 8.300L8.500.8l7.700 7.500" stroke="#fff" strokeWidth="1.300" />
      </Svg>
      <Svg w={21} h={18} className="ml-[12px] mt-[2px]">
        <path d="M5.500 2.500h14v10.500h-14M11 13v4M7 16.500h8" stroke="#fff" strokeWidth="1.200" />
        <path d="M.8 1.600h4v4h-4zM2.700 6v6.500h3" stroke="#fff" strokeWidth="1.200" />
      </Svg>
      <Svg w={22} h={18} className="ml-[8px] mt-[2px]">
        <path d="M1 6.500h3L7.500 3v12.500L4 12H1z" stroke="#fff" strokeWidth="1.200" />
        <path d="M10.500 6.500q2 2.500 0 5.500M13.500 4q4 5 0 10.500M17 1q6 8 0 16" stroke="#fff" strokeWidth="1.200" />
      </Svg>
      <div className="ml-[16px] mr-[12px] flex h-[47px] w-[60px] flex-col items-end pt-[2px] leading-[23px]">
        <Txt>11:24 PM</Txt>
        <Txt>4/9/2022</Txt>
      </div>
      <div className="mr-[6px] h-[47px] w-px bg-[#555]" />
    </div>
  </div>
);

export default function App() {
  return (
    <div className="flex h-[942px] w-[1920px] flex-col overflow-hidden bg-white font-['Open_Sans','Noto_Sans',sans-serif]">
      <div className="h-[4px] shrink-0 border-b border-[#d3d6d9] bg-white" />
      <div className="relative h-[891px] w-[1919px] shrink-0 overflow-hidden bg-[#0063b1]">
        <div className="flex pt-[5px]">
          <Shortcut className="w-[90px]" icon={<RecycleBin />} lines={["Recycle Bin"]} />
          <Shortcut className="ml-[2px] w-[97px]" icon={<CodeBlocks />} lines={["CodeBlocks"]} />
          <Shortcut className="w-[94px] [&>svg]:mr-[12px]" icon={<BlankShortcut />} lines={["Microsoft", "Edge"]} />
        </div>
        <Chrome />
        <WinScp />
        <div className="absolute left-0 top-[431px]">
          <Svg w={26} h={80}>
            <path d="M-1 1L19 7q5 2 5 6v52q0 4-5 6L-1 79z" fill="#fff" fillOpacity=".85" stroke="#b8b8b8" />
            <path d="M7.500 26v30M12.500 26v30M17.500 26v30" stroke="#c4c6c8" strokeWidth="2.200" />
          </Svg>
        </div>
      </div>
      <Taskbar />
    </div>
  );
}
